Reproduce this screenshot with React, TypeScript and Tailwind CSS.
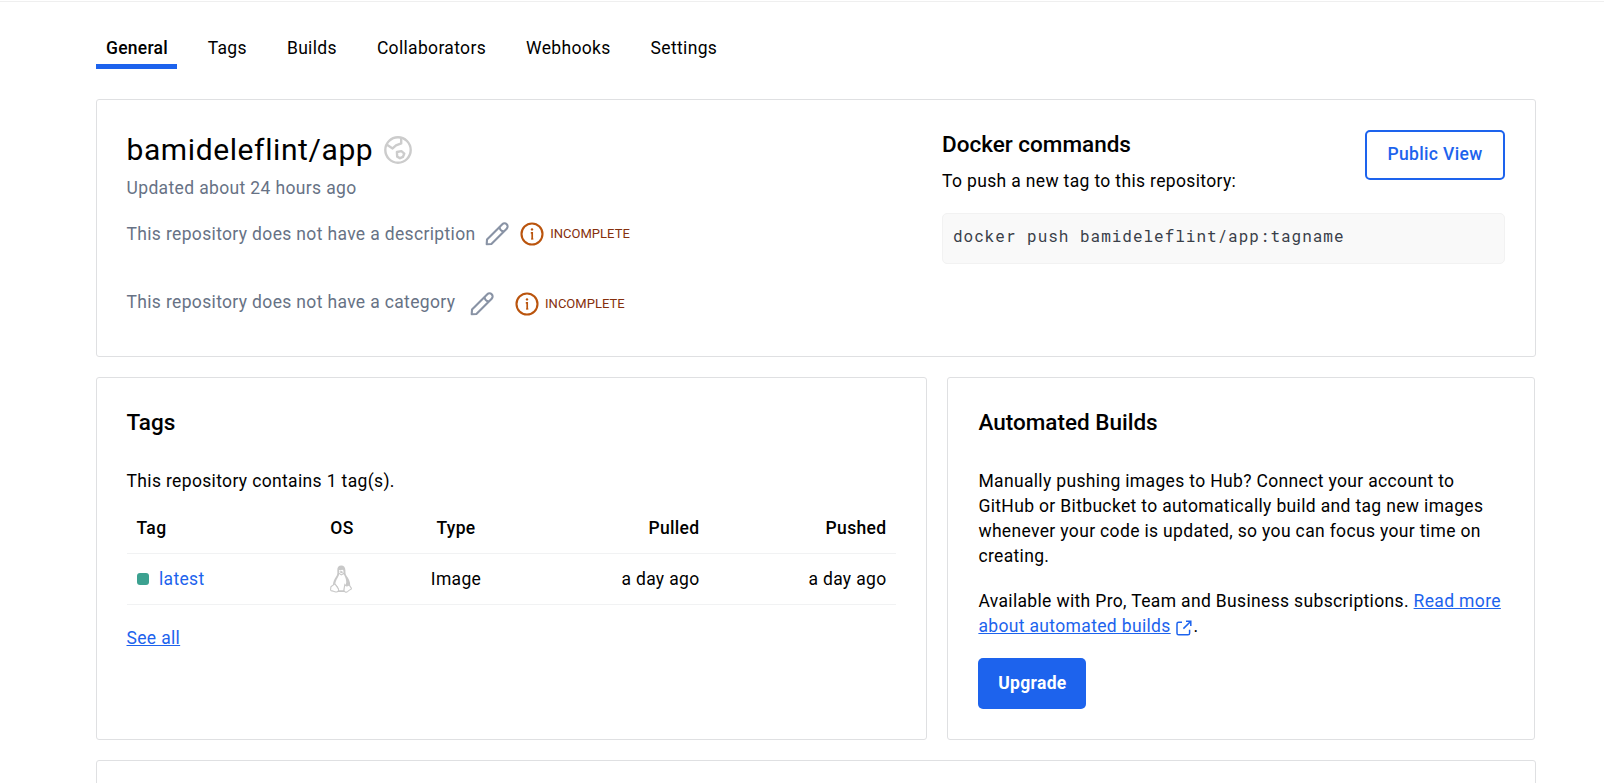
import React from "react";

const tabs = ["General", "Tags", "Builds", "Collaborators", "Webhooks", "Settings"];

function GlobeIcon() {
  return (
    <svg width="28" height="28" viewBox="0 0 28 28" fill="none" stroke="#cccccc" strokeWidth="2.4" strokeLinejoin="round">
      <circle cx="14" cy="14" r="12.7" />
      <path d="M2.6 8.6L8.6 12.4L12 9.4L17.2 7.4V2" />
      <path d="M12.9 16L17.4 15.1L20.3 17.6L19 20.8L16 22.2L13.2 20.6Z" />
    </svg>
  );
}

function PencilIcon() {
  return (
    <svg width="24" height="24" viewBox="0 0 24 24" fill="none" stroke="#8993a5" strokeWidth="2.1" strokeLinejoin="round">
      <path d="M1.7 22.3L2 17.6L17.3 2.3A2.9 2.9 0 0 1 21.7 6.7L6.4 22Z" />
      <path d="M14.4 5.2C14.8 7.8 16.4 9.2 18.8 9.6" />
    </svg>
  );
}

function InfoIcon() {
  return (
    <svg width="24" height="24" viewBox="0 0 24 24" fill="none" stroke="#ba540d" strokeWidth="2.1">
      <circle cx="12" cy="12" r="10.5" />
      <path d="M10.8 10.8H12.2V17.2" strokeWidth="1.7" />
      <path d="M11 17H13.4" strokeWidth="1" />
      <circle cx="12" cy="7.4" r="1.2" fill="#ba540d" stroke="none" />
    </svg>
  );
}

function PenguinIcon() {
  return (
    <svg width="22" height="28" viewBox="0 0 22 28">
      <path
        d="M11.3.5C8.6.5 7.2 2.4 7.3 5.2C7.4 8 7.6 9.4 6 11.8C4.2 14.4 3 17 3 20L8 27H14L20.2 20.6C20.4 16.6 18.4 13.4 16.8 11.2C15.2 9 15.5 7.4 15.4 5.2C15.3 2.2 13.9.5 11.3.5Z"
        fill="#c8c8c8"
      />
      <path d="M9.2 9C8.8 12 5.3 15.4 5.4 19.2C7 20.6 8.8 22.6 8.8 25.2H13.6C14 23 14 20.8 15.6 19.4C17 18 16 12.6 13.6 9.2L11.2 10.4Z" fill="#ffffff" />
      <path d="M9 5.4C9.6 4.6 10.5 4.8 10.8 5.6C11.4 4.6 13 4.6 13.4 5.6L13.6 7.8L11.4 9.2L9.1 7.8Z" fill="#ffffff" />
      <path d="M9.2 6.8L11.4 6L13.5 7.2L11.3 8.2Z" fill="#c8c8c8" />
      <path d="M4 18.9C5.6 18.6 6.4 20.8 8.2 23.6C9.2 25.6 8 27.1 6 27C4 26.8 3.2 26 1 25.6C.1 25.2.9 23.6.8 22.2C.8 20.8 2.8 21.2 4 18.9Z" fill="#ffffff" stroke="#c8c8c8" strokeWidth="1.1" />
      <path d="M14.8 19.8C15.8 21.6 18 21 19.2 19.6C19.8 21.8 21.6 22.8 21.4 23.8C20.4 24.8 18.8 25.2 17.6 26.6C16.2 27.6 14 27 14 25.2C14 23.4 14.4 21.8 14.8 19.8Z" fill="#ffffff" stroke="#c8c8c8" strokeWidth="1.1" />
    </svg>
  );
}

function ExternalIcon() {
  return (
    <svg className="mr-px ml-px inline-block align-[-4px]" width="16" height="16" viewBox="0 0 16 16" fill="none" stroke="#1d63ed" strokeWidth="1.5">
      <path d="M6 2.2H2.6Q1 2.2 1 3.8V13.2Q1 14.8 2.6 14.8H12Q13.6 14.8 13.6 13.2V9.8" />
      <path d="M7.4 8.6L14.8 1.2M10 1.2H14.8V6" />
    </svg>
  );
}

function Incomplete() {
  return (
    <span className="flex items-center gap-[6px]">
      <InfoIcon />
      <span className="text-[13px] leading-5 font-normal tracking-[0.02px] text-[#852f0c]">INCOMPLETE</span>
    </span>
  );
}

export default function App() {
  return (
    <div className="h-[783px] overflow-hidden bg-white pt-px font-[Roboto,sans-serif] text-[17.5px] leading-[25px] tracking-[0.335px] text-black">
      <div className="border-t border-[#efefef] pr-[68px] pl-24">
        <nav className="flex gap-5 pt-[34px]">
          {tabs.map((tab, i) => (
            <a
              key={tab}
              className={
                i === 0
                  ? "mr-[0.7px] w-[81px] border-b-[5px] border-[#1d63ed] pb-[3px] pl-[10px] font-medium tracking-[0.25px]"
                  : "border-b-[5px] border-transparent px-[10px] pb-[3px]"
              }
            >
              {tab}
            </a>
          ))}
        </nav>

        <section className="mt-[30px] flex h-[258px] justify-between rounded-[3px] border border-[#dfe0e2] pt-[30px] pr-[30px] pl-[29.5px]">
          <div className="text-[#677285]">
            <div className="flex h-[40px] items-center gap-[11px] text-black">
              <h1 className="text-[30px] leading-10 tracking-[0.6px]">bamideleflint/app</h1>
              <GlobeIcon />
            </div>
            <p className="mt-[6px] tracking-[0.36px]">Updated about 24 hours ago</p>
            <div className="mt-[20px] flex h-[26px] items-center tracking-[0.345px]">
              <span>This repository does not have a description</span>
              <span className="mr-[11px] ml-[9.7px]"><PencilIcon /></span>
              <Incomplete />
            </div>
            <div className="mt-[42px] flex h-[28px] items-center tracking-[0.345px]">
              <span className="-mt-[2px]">This repository does not have a category</span>
              <span className="mr-[21px] ml-[14.7px] pt-px"><PencilIcon /></span>
              <span className="pt-px"><Incomplete /></span>
            </div>
          </div>
          <div className="w-[563px]">
            <div className="flex items-start justify-between">
              <div>
                <h2 className="text-[22.5px] leading-[28px] font-medium tracking-normal">Docker commands</h2>
                <p className="mt-[11px] tracking-[0.35px]">To push a new tag to this repository:</p>
              </div>
              <button className="h-[50px] w-[140px] rounded-[5px] border-2 border-[#1d63ed] pb-[2px] font-medium text-[#1d63ed]">
                Public View
              </button>
            </div>
            <pre className="mt-[19px] h-[51px] rounded-[5px] border border-[#f2f2f2] bg-[#f9f9f9] pt-[9px] pl-[10px] font-['Roboto_Mono','DejaVu_Sans_Mono',monospace] text-[16px] leading-[25px] tracking-[0.98px] text-[#393f49]">
              docker push bamideleflint/app:tagname
            </pre>
          </div>
        </section>

        <div className="mt-5 flex h-[363px] gap-5">
          <section className="w-[831px] rounded-[3px] border border-[#dfe0e2] pt-[30px] pr-[30px] pl-[29.5px]">
            <h2 className="text-[22.5px] leading-[28px] font-medium tracking-normal">Tags</h2>
            <p className="mt-[33px] tracking-[0.35px]">This repository contains 1 tag(s).</p>
            <table className="mt-[8px] w-[769px] table-fixed border-collapse">
              <colgroup>
                <col className="w-[166px]" />
                <col className="w-[97px]" />
                <col className="w-[132px]" />
                <col className="w-[187px]" />
                <col className="w-[187px]" />
              </colgroup>
              <thead>
                <tr className="h-[51px] border-b border-[#f1f2f3]">
                  <th className="px-[10px] pt-[2px] text-left font-medium">Tag</th>
                  <th className="pt-[2px] pl-[2px] text-center font-medium">OS</th>
                  <th className="pt-[2px] pl-px text-center font-medium">Type</th>
                  <th className="pt-[2px] pr-[9px] text-right font-medium">Pulled</th>
                  <th className="pt-[2px] pr-[9px] text-right font-medium">Pushed</th>
                </tr>
              </thead>
              <tbody>
                <tr className="h-[51px] border-b border-[#f1f2f3]">
                  <td className="px-[10px] pt-[2px]">
                    <span className="flex items-center gap-[10.5px] text-[#1d63ed]">
                      <i className="mb-[2px] h-3 w-3 rounded-[3px] bg-[#3ca190]" />
                      latest
                    </span>
                  </td>
                  <td><span className="flex justify-center"><PenguinIcon /></span></td>
                  <td className="pt-[2px] pl-px text-center">Image</td>
                  <td className="pt-[2px] pr-[9px] text-right">a day ago</td>
                  <td className="pt-[2px] pr-[9px] text-right">a day ago</td>
                </tr>
              </tbody>
            </table>
            <a className="mt-[21px] inline-block text-[#1d63ed] underline">See all</a>
          </section>

          <section className="w-[588px] rounded-[3px] border border-[#dfe0e2] pt-[30px] pr-[10px] pl-[30.4px]">
            <h2 className="text-[22.5px] leading-[28px] font-medium tracking-normal">Automated Builds</h2>
            <p className="mt-[33px] tracking-[0.345px]">
              Manually pushing images to Hub? Connect your account to<br />
              GitHub or Bitbucket to automatically build and tag new images<br />
              whenever your code is updated, so you can focus your time on<br />
              creating.
            </p>
            <p className="mt-5 tracking-[0.345px] whitespace-nowrap">
              Available with Pro, Team and Business subscriptions. <a className="text-[#1d63ed] underline">Read more</a>
              <br />
              <a className="text-[#1d63ed] underline">about automated builds</a>{" "}
              <ExternalIcon />.
            </p>
            <button className="mt-[19px] h-[51px] w-[108px] rounded-[5px] bg-[#1d63ed] font-bold text-white">Upgrade</button>
          </section>
        </div>

        <section className="mt-5 h-[100px] rounded-[3px] border border-[#dfe0e2]" />
      </div>
    </div>
  );
}
